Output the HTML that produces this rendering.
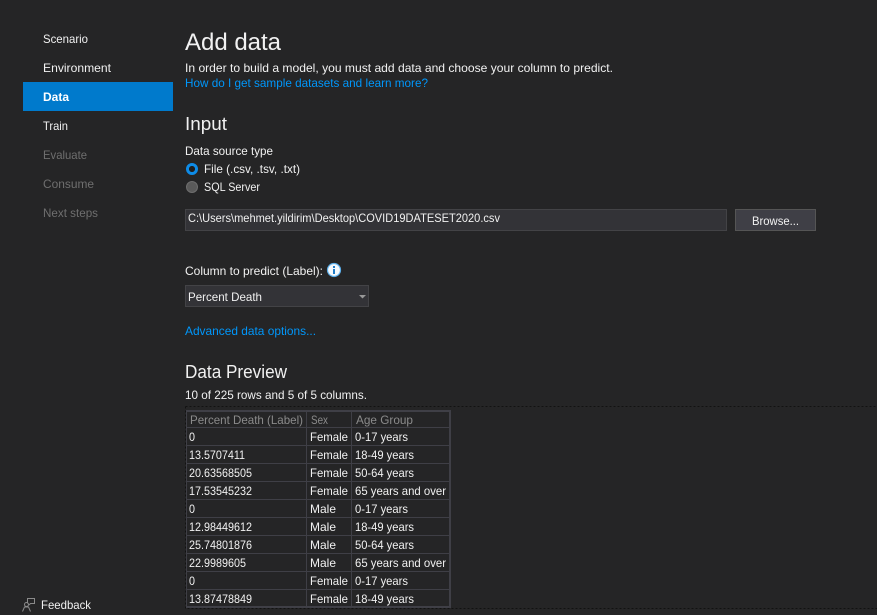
<!DOCTYPE html>
<html>
<head>
<meta charset="utf-8">
<style>
html,body{margin:0;padding:0;background:#252526;width:877px;height:615px;overflow:hidden}
svg{display:block}
text{font-family:"Liberation Sans",sans-serif;font-size:12px;fill:#f1f1f1}
.d{fill:#6f6f6f}
.l{fill:#0097fb}
.h{fill:#8b8b8b}
.big{font-size:18px;fill:#f1f1f1}
</style>
</head>
<body>
<svg width="877" height="615" viewBox="0 0 877 615" xmlns="http://www.w3.org/2000/svg">
<rect width="877" height="615" fill="#252526"/>

<!-- sidebar -->
<rect x="23" y="82" width="150" height="29" fill="#007acc"/>
<text x="43" y="43" textLength="45" lengthAdjust="spacingAndGlyphs">Scenario</text>
<text x="43" y="72" textLength="68" lengthAdjust="spacingAndGlyphs">Environment</text>
<text x="43" y="101" textLength="26" lengthAdjust="spacingAndGlyphs" font-weight="bold" style="fill:#fff">Data</text>
<text x="43" y="130" textLength="25" lengthAdjust="spacingAndGlyphs">Train</text>
<text x="43" y="159" textLength="44" lengthAdjust="spacingAndGlyphs" class="d">Evaluate</text>
<text x="43" y="188" textLength="51" lengthAdjust="spacingAndGlyphs" class="d">Consume</text>
<text x="43" y="217" textLength="55" lengthAdjust="spacingAndGlyphs" class="d">Next steps</text>

<!-- feedback -->
<g fill="none" stroke="#8a8a8a" stroke-width="1">
<path d="M27.5 603.5V598.5H34.5V603.5H30.5L29 605"/>
<circle cx="26.5" cy="604.5" r="2"/>
<path d="M22.5 611.5L24.5 607H28.5L30.5 611.5"/>
</g>
<text x="41" y="609" textLength="50" lengthAdjust="spacingAndGlyphs">Feedback</text>

<!-- header -->
<text x="185" y="50" textLength="96" lengthAdjust="spacingAndGlyphs" style="font-size:24px">Add data</text>
<text x="185" y="72" textLength="428" lengthAdjust="spacingAndGlyphs">In order to build a model, you must add data and choose your column to predict.</text>
<text x="185" y="87" textLength="243" lengthAdjust="spacingAndGlyphs" class="l">How do I get sample datasets and learn more?</text>

<text x="185" y="130" textLength="42" lengthAdjust="spacingAndGlyphs" class="big">Input</text>
<text x="185" y="155" textLength="88" lengthAdjust="spacingAndGlyphs">Data source type</text>

<!-- radios -->
<circle cx="192" cy="169" r="4.5" fill="#252526" stroke="#0e8ce8" stroke-width="3"/>
<circle cx="192" cy="169" r="3" fill="#1e1e1e"/>
<circle cx="192" cy="187" r="5.5" fill="#5a5a5a" stroke="#6e6e6e" stroke-width="1"/>
<text x="204" y="173" textLength="96" lengthAdjust="spacingAndGlyphs">File (.csv, .tsv, .txt)</text>
<text x="204" y="191" textLength="56" lengthAdjust="spacingAndGlyphs">SQL Server</text>

<!-- path input -->
<rect x="185.5" y="209.5" width="541" height="21" fill="#333337" stroke="#434346"/>
<text x="188" y="222" textLength="312" lengthAdjust="spacingAndGlyphs">C:\Users\mehmet.yildirim\Desktop\COVID19DATESET2020.csv</text>
<rect x="735.5" y="209.5" width="80" height="21" fill="#3f3f46" stroke="#555555"/>
<text x="752" y="225" textLength="47" lengthAdjust="spacingAndGlyphs">Browse...</text>

<!-- label -->
<text x="185" y="275" textLength="138" lengthAdjust="spacingAndGlyphs">Column to predict (Label):</text>
<circle cx="334" cy="270" r="6.5" fill="#f4f9fd" stroke="#5db0ec" stroke-width="1.2"/>
<rect x="333" y="269" width="2" height="5" fill="#1e7cc8"/>
<rect x="333" y="266" width="2" height="2" fill="#1e7cc8"/>

<!-- select -->
<rect x="185.5" y="285.5" width="183" height="21" fill="#333337" stroke="#434346"/>
<text x="188" y="301" textLength="74" lengthAdjust="spacingAndGlyphs">Percent Death</text>
<path d="M359 295H366L362.5 298.5Z" fill="#999"/>

<text x="185" y="335" textLength="131" lengthAdjust="spacingAndGlyphs" class="l">Advanced data options...</text>

<text x="185" y="378" textLength="102" lengthAdjust="spacingAndGlyphs" class="big">Data Preview</text>
<text x="185" y="399" textLength="182" lengthAdjust="spacingAndGlyphs">10 of 225 rows and 5 of 5 columns.</text>

<!-- dotted frame -->
<path d="M185.5 406.5H877M185.5 406.5V608.5H877" fill="none" stroke="#121212" stroke-dasharray="2 2"/>

<!-- table -->
<g fill="none" stroke="#3f3f46" stroke-width="1">
<path d="M186.5 411V607"/>
<path d="M186 427.5H450M186 445.5H450M186 463.5H450M186 481.5H450M186 499.5H450M186 517.5H450M186 535.5H450M186 553.5H450M186 571.5H450M186 589.5H450"/>
<path d="M306.5 411V607M351.5 411V607"/>
<path d="M186 411H451M186 607H451M450 410V608" stroke-width="2"/>
</g>

<text x="190" y="424" textLength="113" lengthAdjust="spacingAndGlyphs" class="h">Percent Death (Label)</text>
<text x="311" y="424" textLength="17" lengthAdjust="spacingAndGlyphs" class="h">Sex</text>
<text x="356" y="424" textLength="57" lengthAdjust="spacingAndGlyphs" class="h">Age Group</text>

<text x="189" y="441" textLength="6" lengthAdjust="spacingAndGlyphs">0</text>
<text x="310" y="441" textLength="38" lengthAdjust="spacingAndGlyphs">Female</text>
<text x="355" y="441" textLength="53" lengthAdjust="spacingAndGlyphs">0-17 years</text>

<text x="189" y="459" textLength="56" lengthAdjust="spacingAndGlyphs">13.5707411</text>
<text x="310" y="459" textLength="38" lengthAdjust="spacingAndGlyphs">Female</text>
<text x="355" y="459" textLength="59" lengthAdjust="spacingAndGlyphs">18-49 years</text>

<text x="189" y="477" textLength="63" lengthAdjust="spacingAndGlyphs">20.63568505</text>
<text x="310" y="477" textLength="38" lengthAdjust="spacingAndGlyphs">Female</text>
<text x="355" y="477" textLength="59" lengthAdjust="spacingAndGlyphs">50-64 years</text>

<text x="189" y="495" textLength="63" lengthAdjust="spacingAndGlyphs">17.53545232</text>
<text x="310" y="495" textLength="38" lengthAdjust="spacingAndGlyphs">Female</text>
<text x="355" y="495" textLength="91" lengthAdjust="spacingAndGlyphs">65 years and over</text>

<text x="189" y="513" textLength="6" lengthAdjust="spacingAndGlyphs">0</text>
<text x="310" y="513" textLength="26" lengthAdjust="spacingAndGlyphs">Male</text>
<text x="355" y="513" textLength="53" lengthAdjust="spacingAndGlyphs">0-17 years</text>

<text x="189" y="531" textLength="63" lengthAdjust="spacingAndGlyphs">12.98449612</text>
<text x="310" y="531" textLength="26" lengthAdjust="spacingAndGlyphs">Male</text>
<text x="355" y="531" textLength="59" lengthAdjust="spacingAndGlyphs">18-49 years</text>

<text x="189" y="549" textLength="63" lengthAdjust="spacingAndGlyphs">25.74801876</text>
<text x="310" y="549" textLength="26" lengthAdjust="spacingAndGlyphs">Male</text>
<text x="355" y="549" textLength="59" lengthAdjust="spacingAndGlyphs">50-64 years</text>

<text x="189" y="567" textLength="57" lengthAdjust="spacingAndGlyphs">22.9989605</text>
<text x="310" y="567" textLength="26" lengthAdjust="spacingAndGlyphs">Male</text>
<text x="355" y="567" textLength="91" lengthAdjust="spacingAndGlyphs">65 years and over</text>

<text x="189" y="585" textLength="6" lengthAdjust="spacingAndGlyphs">0</text>
<text x="310" y="585" textLength="38" lengthAdjust="spacingAndGlyphs">Female</text>
<text x="355" y="585" textLength="53" lengthAdjust="spacingAndGlyphs">0-17 years</text>

<text x="189" y="603" textLength="63" lengthAdjust="spacingAndGlyphs">13.87478849</text>
<text x="310" y="603" textLength="38" lengthAdjust="spacingAndGlyphs">Female</text>
<text x="355" y="603" textLength="59" lengthAdjust="spacingAndGlyphs">18-49 years</text>
</svg>
</body>
</html>
